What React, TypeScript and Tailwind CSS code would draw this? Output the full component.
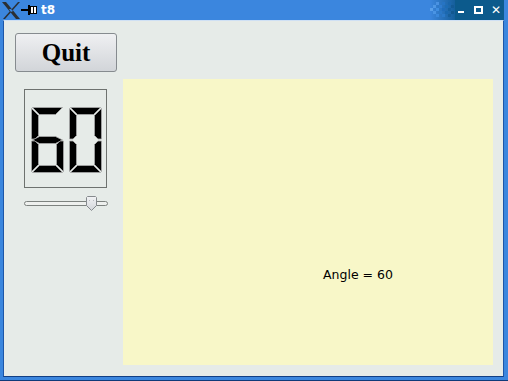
const W = 32;
const H = 65;
const T = 7;
const M = H / 2;

type Pt = [number, number];

const SEGMENTS: Record<string, Pt[]> = {
  a: [[1, 0], [W - 1, 0], [W - 1 - T, T], [1 + T, T]],
  b: [[W, 1], [W, M - 1], [W - T / 2, M - 1], [W - T, M - 1 - T / 2], [W - T, T + 1]],
  c: [[W, M + 1], [W, H - 1], [W - T, H - 1 - T], [W - T, M + 1 + T / 2], [W - T / 2, M + 1]],
  d: [[1, H], [1 + T, H - T], [W - 1 - T, H - T], [W - 1, H]],
  e: [[0, M + 1], [T / 2, M + 1], [T, M + 1 + T / 2], [T, H - 1 - T], [0, H - 1]],
  f: [[0, 1], [T, T + 1], [T, M - 1 - T / 2], [T / 2, M - 1], [0, M - 1]],
  g: [[1, M], [1 + T, M - T / 2], [W - 1 - T, M - T / 2], [W - 1, M], [W - 1 - T, M + T / 2], [1 + T, M + T / 2]],
};

const DIGITS: Record<string, string[]> = {
  "6": ["a", "f", "g", "e", "d", "c"],
  "0": ["a", "b", "c", "d", "e", "f"],
};

function Digit({ ch, x, y }: { ch: string; x: number; y: number }) {
  return (
    <g transform={`translate(${x} ${y})`}>
      {DIGITS[ch].map((s) => (
        <polygon
          key={s}
          points={SEGMENTS[s].map((p) => p.join(",")).join(" ")}
          fill="#000"
          stroke="#a8a8a8"
          strokeWidth={0.8}
        />
      ))}
    </g>
  );
}

function LcdNumber() {
  return (
    <div className="h-[99px] w-[83px] border border-[#6e726f] bg-[#e6ebe8]">
      <svg width="81" height="97" viewBox="0 0 81 97">
        <Digit ch="6" x={6.5} y={17.5} />
        <Digit ch="0" x={44.5} y={17.5} />
      </svg>
    </div>
  );
}

function Slider() {
  return (
    <div className="relative mt-[7px] h-[15px] w-[84px] pt-[6px]">
      <div className="h-[5px] w-[84px] rounded-[3px] border border-[#7d827f] bg-[#eef0ee]" />
      <svg className="absolute left-[62px] top-[1px]" width="11" height="15" viewBox="0 0 11 15">
        <defs>
          <linearGradient id="hd" x1="0" y1="0" x2="0" y2="1">
            <stop offset="0" stopColor="#f2f3f5" />
            <stop offset="1" stopColor="#d3d6da" />
          </linearGradient>
        </defs>
        <path d="M1.5 0.5 H9.5 L10.5 1.5 V9.5 L5.5 14.5 L0.5 9.5 V1.5 Z" fill="url(#hd)" stroke="#868a8e" />
        <rect x="3" y="4" width="1" height="1" fill="#b8bcc0" />
        <rect x="7" y="4" width="1" height="1" fill="#b8bcc0" />
      </svg>
    </div>
  );
}

function XLogo() {
  return (
    <svg width="20" height="19" viewBox="0 0 20 19" className="ml-[1px]">
      <polygon points="1,1 5,1 19,18 15,18" fill="#2b2f33" />
      <polygon points="17,1 19,1 4,18 2,18" fill="#2b2f33" />
      <polygon points="8,8 10,8 12,10 10,11" fill="#3a86df" />
    </svg>
  );
}

function PinIcon() {
  return (
    <svg width="17" height="12" viewBox="0 0 17 12">
      <rect x="0" y="5" width="7" height="2" fill="#000" />
      <rect x="7" y="1" width="2" height="10" fill="#000" />
      <rect x="9.5" y="2.5" width="6" height="7" fill="#fff" stroke="#000" />
      <rect x="12" y="3" width="1" height="6" fill="#000" />
    </svg>
  );
}

function Squares() {
  const cells: [number, number, string][] = [
    [0, 6, "#5aa0ea"], [3, 3, "#4f98e6"], [3, 9, "#4a94e4"], [6, 0, "#4a92e2"],
    [6, 6, "#3f8ee2"], [6, 12, "#3a88dc"], [9, 3, "#2f7cd0"], [9, 9, "#2a78c8"],
    [12, 0, "#2674c4"], [12, 6, "#1f6cbc"], [12, 12, "#2b79c9"], [15, 3, "#1c6cb6"],
    [15, 9, "#1a68b0"], [18, 0, "#1a66ac"], [18, 6, "#16609f"], [18, 12, "#175f9c"],
    [21, 3, "#135a96"], [21, 9, "#125890"],
  ];
  return (
    <svg width="25" height="20" viewBox="0 0 25 20">
      {cells.map(([x, y, c], i) => (
        <rect key={i} x={x} y={y + 2} width="3" height="3" fill={c} />
      ))}
    </svg>
  );
}

function TitleBar() {
  return (
    <div className="flex h-[20px] items-center bg-[#3b86de]">
      <XLogo />
      <PinIcon />
      <span className="ml-[3px] text-[12px] font-bold leading-none text-white [font-family:'DejaVu_Sans',sans-serif]">
        t8
      </span>
      <div className="ml-auto flex h-full items-center">
        <div className="h-full w-[25px] bg-gradient-to-r from-[#3b86de] to-[#145f9c]">
          <Squares />
        </div>
        <div className="flex h-full w-[49px] items-center bg-[#0c5a8c] pl-[3px]">
          <div className="mt-[4px] h-[2px] w-[6px] bg-white" />
          <div className="ml-[10px] h-[8px] w-[9px] border-[2px] border-white" />
          <span className="ml-[8px] text-[12px] font-bold leading-none text-white [font-family:'DejaVu_Sans',sans-serif]">
            ✕
          </span>
        </div>
        <div className="h-full w-[4px] bg-[#3b86de]" />
      </div>
    </div>
  );
}

export default function App() {
  return (
    <div className="flex h-[381px] w-[508px] flex-col bg-[#3b86de] [font-family:'DejaVu_Sans',sans-serif]">
      <TitleBar />
      <div className="ml-[3px] mr-[4px] mb-[3px] flex-1 border border-t-[#cfe0f4] border-l-[#1d56a8] border-r-[#1d56a8] border-b-[#123f84] bg-[#e6ebe8]">
        <div className="pl-[11px] pt-[12px]">
          <button className="h-[39px] w-[102px] rounded-[3px] border border-[#868b8f] bg-gradient-to-b from-[#eff0f2] to-[#d2d5d9] text-[25px] font-bold leading-none text-black [font-family:'Liberation_Serif',serif]">
            Quit
          </button>
          <div className="mt-[7px] flex">
            <div className="w-[108px] pl-[9px] pt-[10px]">
              <LcdNumber />
              <Slider />
            </div>
            <div className="h-[286px] w-[370px] bg-[#f8f7c8] pl-[200px] pt-[183px]">
              <span className="text-[12.5px] leading-[15px] text-black">Angle = 60</span>
            </div>
          </div>
        </div>
      </div>
      <div className="h-[1px] bg-[#0f3a7a]" />
    </div>
  );
}
